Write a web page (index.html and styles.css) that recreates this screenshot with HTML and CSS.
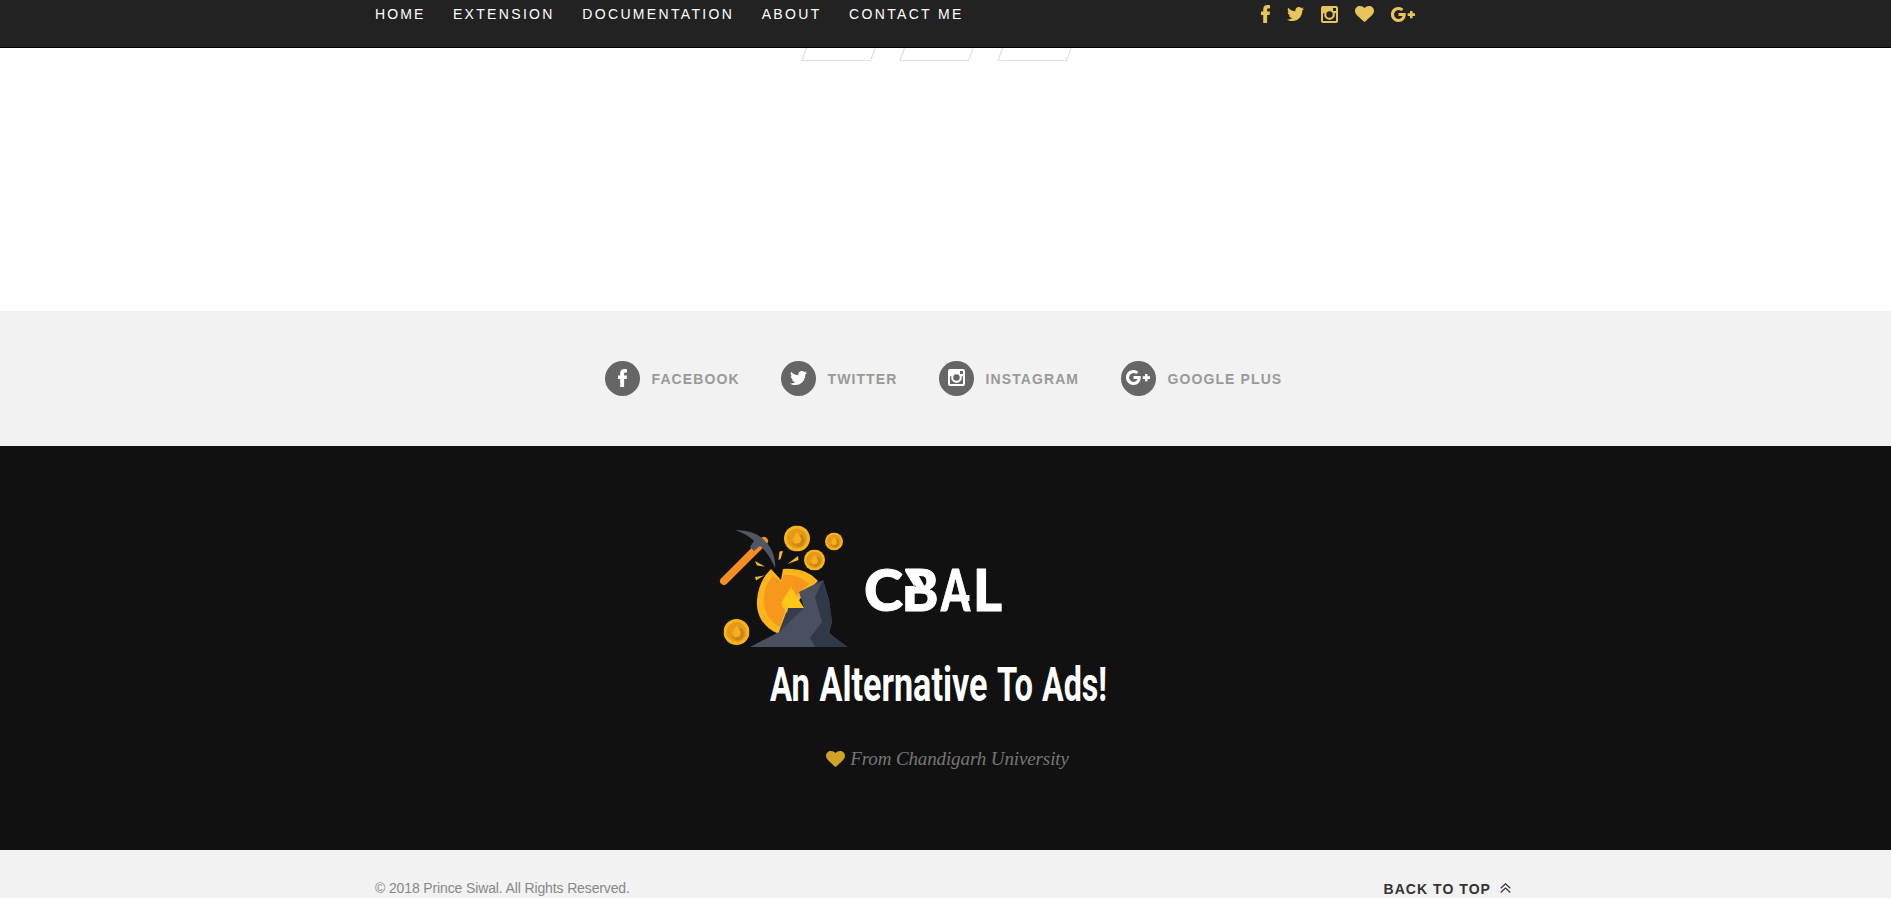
FILE: index.html
```html
<!DOCTYPE html>
<html lang="en">
<head>
<meta charset="utf-8">
<title>CBAL</title>
<link rel="stylesheet" href="styles.css">
</head>
<body>
<svg class="sprite" aria-hidden="true">
  <symbol id="facebook" viewBox="0 0 9 18"><path d="M2.200 18V9.900H0V6.500h2.200V4.400C2.200 1.600 3.700.1 6.400.1c1.200 0 2.200.1 2.600.2v3.100H7.400C6.300 3.400 6.100 3.900 6.100 4.800v1.700H9l-.4 3.400H6.100V18z"/></symbol>
  <symbol id="twitter" viewBox="0 48 512 416" preserveAspectRatio="none"><path d="M459.37 151.716c.325 4.548.325 9.097.325 13.645 0 138.72-105.583 298.558-298.558 298.558-59.452 0-114.680-17.219-161.137-47.106 8.447.974 16.568 1.299 25.340 1.299 49.055 0 94.213-16.568 130.274-44.832-46.132-.975-84.792-31.188-98.112-72.772 6.498.974 12.995 1.624 19.818 1.624 9.421 0 18.843-1.300 27.614-3.573-48.081-9.747-84.143-51.980-84.143-102.985v-1.299c13.969 7.797 30.214 12.670 47.431 13.319-28.264-18.843-46.781-51.005-46.781-87.391 0-19.492 5.197-37.360 14.294-52.954 51.655 63.675 129.300 105.258 216.365 109.807-1.624-7.797-2.599-15.918-2.599-24.040 0-57.828 46.782-104.934 104.934-104.934 30.213 0 57.502 12.670 76.670 33.137 23.715-4.548 46.456-13.320 66.599-25.340-7.798 24.366-24.366 44.833-46.132 57.827 21.117-2.273 41.584-8.122 60.426-16.243-14.292 20.791-32.161 39.308-52.628 54.253z"/></symbol>
  <symbol id="instagram" viewBox="0 0 17 17"><path fill-rule="evenodd" d="M2 0h13a2 2 0 0 1 2 2v13a2 2 0 0 1-2 2H2a2 2 0 0 1-2-2V2a2 2 0 0 1 2-2zm10 2v3h3V2zM2 7.200V14.500q0 .5.500.5h12q.5 0 .5-.5V7.200h-1.400A5.300 5.300 0 1 1 3.400 7.200zm6.500-1.900a3.200 3.200 0 1 0 0 6.400 3.200 3.200 0 0 0 0-6.400z"/></symbol>
  <symbol id="heart" viewBox="0 0 19 16"><path d="M9.500 16 7.600 14.400C2.500 9.900 0 7.800 0 4.800 0 2.100 2.200 0 4.900 0c1.800 0 3.500.8 4.600 2.100C10.600.8 12.300 0 14.100 0 16.800 0 19 2.100 19 4.800c0 3-2.500 5.100-7.600 9.600z"/></symbol>
  <symbol id="gplus" viewBox="0 0 24 15"><path d="M7.500 6.100v3h4c-.5 1.900-2 2.800-4 2.800a4.400 4.400 0 1 1 2.800-7.800L12.500 2A7.500 7.500 0 1 0 7.500 15c4.400 0 7.200-3.200 7.200-7.500 0-.5 0-.9-.1-1.400zM19 4v2.300h-2.300v2.600H19v2.300h2.600V8.900H24V6.300h-2.400V4z"/></symbol>
  <symbol id="coin" viewBox="-12 -12 24 24"><circle r="12" fill="#f7b51c"/><circle r="9.300" fill="#e39a1c"/><path d="M-5 5 4-4C9-1 8 7 1 8z" fill="#c98618"/><path d="M0-6 4 0 3 4-2 5-4 1z" fill="#f9ae1d"/></symbol>
</svg>

<header class="topbar">
  <div class="topbar-inner">
    <nav class="menu">
      <a>HOME</a><a>EXTENSION</a><a>DOCUMENTATION</a><a>ABOUT</a><a>CONTACT ME</a>
    </nav>
    <div class="top-social">
      <svg class="i-fb"><use href="#facebook"/></svg>
      <svg class="i-tw"><use href="#twitter"/></svg>
      <svg class="i-ig"><use href="#instagram"/></svg>
      <svg class="i-heart"><use href="#heart"/></svg>
      <svg class="i-gp"><use href="#gplus"/></svg>
    </div>
  </div>
</header>

<main class="blank">
  <svg class="slants" viewBox="801 48 272 14"><path d="M807 47l-5 13.500h68.500l5-13.500M905 47l-5 13.500h68.500l5-13.500M1003 47l-5 13.500h68.500l5-13.500"/></svg>
</main>

<section class="social">
  <a class="social-link fb"><span class="disc"><svg class="i-fb"><use href="#facebook"/></svg></span>FACEBOOK</a>
  <a class="social-link tw"><span class="disc"><svg class="i-tw"><use href="#twitter"/></svg></span>TWITTER</a>
  <a class="social-link ig"><span class="disc"><svg class="i-ig"><use href="#instagram"/></svg></span>INSTAGRAM</a>
  <a class="social-link gp"><span class="disc"><svg class="i-gp"><use href="#gplus"/></svg></span>GOOGLE PLUS</a>
</section>

<section class="brand">
  <svg class="logo" viewBox="710 520 471 190">
    <!-- pickaxe -->
    <path d="M724 581 764 541" stroke="#f58d22" stroke-width="8" stroke-linecap="round"/>
    <path d="M735 530c14 0 22 4 27 8l5 5c6 7 9 17 8 25-5-12-10-18-15-22l-6 5-4-4 4-6c-5-5-11-8-19-11z" fill="#515667"/>
    <!-- coins -->
    <use href="#coin" x="784" y="525.500" width="26" height="26"/>
    <use href="#coin" x="825" y="532.500" width="18" height="18"/>
    <use href="#coin" x="804" y="549.500" width="21" height="21"/>
    <use href="#coin" x="723.500" y="619" width="26" height="26"/>
    <!-- sparks -->
    <path d="M779.500 551.500l3.500-.5-2.500 8-2 1zM798 556l.5 4-11 4zM755 561l10 5.500-8-1zM755 577l9-1.500-8 5z" fill="#f9b52a"/>
    <!-- split coin and rock -->
    <path d="M779 634c-15-6-23-18-22-34 1-14 7-24 14-31l10 11 2-11c14-1 26 2 35 12l-18 18-10 17z" fill="#fcb61c"/>
    <path d="M780 627c-11-6-16-14-16-27 0-12 4-19 9-24l9 6 1-7c10-1 20 3 26 9l-22 20z" fill="#f7981c"/>
    <path d="M750 647 779 632 788 608H804L799 592 823 580 829 600 832 622 829 633 847 647z" fill="#4b5060"/>
    <path d="M823 580 829 600 832 622 828 633 848 647H815L810 638 822 622 815 597z" fill="#2f3947"/>
    <path d="M779 632 788 608H804z" fill="#373d4a"/>
    <path d="M791 587 804 608H788L781 603z" fill="#fdc719"/>
    <path d="M781 604l7 4-1 5z" fill="#fdc719"/>
    <g class="wordmark">
      <text x="864" y="611" textLength="39" lengthAdjust="spacingAndGlyphs">C</text>
      <text x="901.500" y="611" textLength="37" lengthAdjust="spacingAndGlyphs">B</text>
      <text x="941" y="611" textLength="29" lengthAdjust="spacingAndGlyphs">A</text>
      <text x="973" y="611" textLength="29" lengthAdjust="spacingAndGlyphs">L</text>
    </g>
    <!-- slash through the B, notch on the A -->
    <path d="M903 568 914 586H903z" fill="#111"/>
    <path d="M905 569h10l10 18h-9z" fill="#fff"/>
    <path d="M962 595h7.500v6H962z" fill="#fff"/>
    <g class="slogan">
      <text x="770" y="701" textLength="40" lengthAdjust="spacingAndGlyphs">An</text>
      <text x="819.500" y="701" textLength="168" lengthAdjust="spacingAndGlyphs">Alternative</text>
      <text x="997" y="701" textLength="36" lengthAdjust="spacingAndGlyphs">To</text>
      <text x="1042" y="701" textLength="65" lengthAdjust="spacingAndGlyphs">Ads!</text>
    </g>
  </svg>
  <p class="from"><svg class="i-heart"><use href="#heart"/></svg>From Chandigarh University</p>
</section>

<footer class="footer">
  <div class="footer-inner">
    <span class="copy">© 2018 Prince Siwal. All Rights Reserved.</span>
    <a class="totop">BACK TO TOP<svg viewBox="0 0 11 10"><path d="M.7 5.300 5.500.8l4.800 4.500M.7 9.500 5.500 5l4.800 4.500"/></svg></a>
  </div>
</footer>
</body>
</html>
```
FILE: styles.css
```css
* { box-sizing: border-box; }
body {
  margin: 0;
  height: 898px;
  overflow: hidden;
  background: #fff;
  font: 14px/20px "Liberation Sans", Arial, sans-serif;
}
svg { display: block; fill: currentColor; flex: none; }
.sprite { position: absolute; width: 0; height: 0; }
.i-fb { width: 9px; height: 18px; }
.i-tw { width: 17px; height: 14px; }
.i-ig { width: 17px; height: 17px; }
.i-heart { width: 19px; height: 16px; }
.i-gp { width: 24px; height: 15px; }

.topbar { height: 48px; background: #222; border-bottom: 1px solid #000; }
.topbar-inner {
  display: flex;
  justify-content: space-between;
  width: 1141px;
  margin: 0 auto;
  padding: 4px 101px 0 0;
}
.menu { display: flex; gap: 27.5px; color: #fff; letter-spacing: 2.33px; white-space: nowrap; }
.menu a:first-child { letter-spacing: 2.1px; }
.top-social { display: flex; align-items: center; height: 20px; gap: 17px; color: #e8c55a; }

.blank { height: 263px; }
.slants { width: 272px; height: 14px; margin-left: 801px; fill: none; stroke: #e0e0e0; stroke-width: 1.2; }

.social {
  display: flex;
  height: 135px;
  padding: 50px 0 0 605px;
  background: #f2f2f2;
}
.social-link {
  display: flex;
  align-items: center;
  height: 35px;
  color: #999;
  font-weight: bold;
  letter-spacing: 1.1px;
  white-space: nowrap;
}
.fb { width: 176px; }
.tw { width: 158px; }
.ig { width: 182px; }
.disc {
  display: flex;
  align-items: center;
  justify-content: center;
  width: 35px;
  height: 35px;
  margin-right: 11.5px;
  padding: 0 1px 2px 0;
  border-radius: 50%;
  background: #666;
  color: #fff;
}

.brand {
  display: flex;
  flex-direction: column;
  align-items: center;
  height: 404px;
  padding-top: 74px;
  background: #111;
}
.logo { width: 471px; height: 190px; fill: none; overflow: visible; }
.wordmark { fill: #fff; stroke: #fff; stroke-width: 1; stroke-linejoin: round; font: 900 58px Lato, sans-serif; }
.slogan { fill: #fff; font: 700 49px Roboto, sans-serif; }
.from {
  display: flex;
  align-items: center;
  gap: 5px;
  margin: 37px 0 0 4px;
  color: #777;
  font: italic 19px/24px "Liberation Serif", "Times New Roman", serif;
  letter-spacing: -.12px;
  white-space: nowrap;
}
.from svg { color: #cfa323; }

.footer { height: 48px; background: #f2f2f2; }
.footer-inner {
  display: flex;
  justify-content: space-between;
  width: 1141px;
  margin: 0 auto;
  padding: 28px 5px 0 0;
}
.copy { color: #888; letter-spacing: -.13px; }
.totop { display: flex; color: #333; font-weight: bold; letter-spacing: 1.05px; padding-top: 1px; }
.totop svg { width: 11px; height: 10px; margin: 4px 0 0 9px; fill: none; stroke: #333; stroke-width: 1.2; }
```
